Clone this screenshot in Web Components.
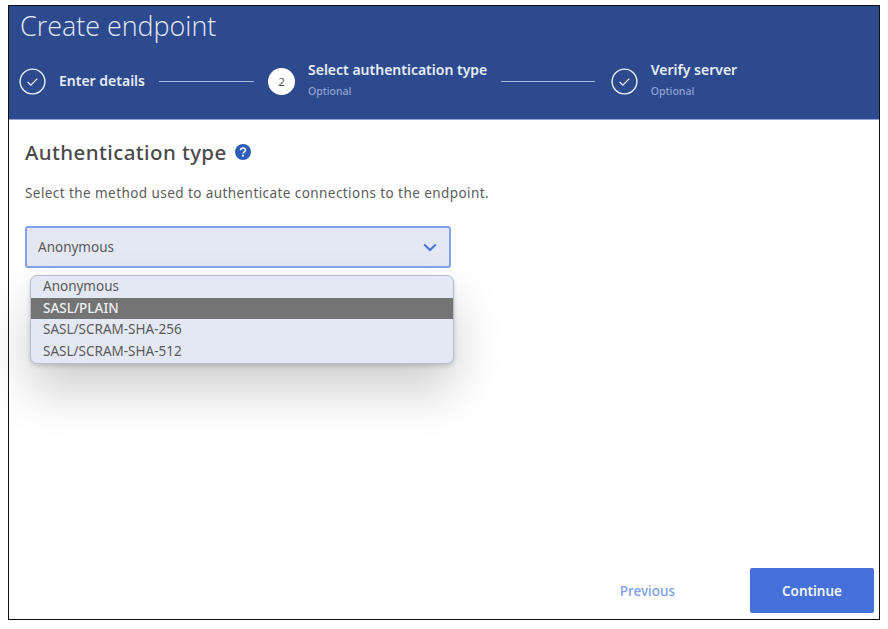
<!DOCTYPE html>
<html>
<head>
<meta charset="utf-8">
<title>Create endpoint</title>
<style>
  html, body { margin: 0; background: #fff; }
  body { padding: 5px 8px 0; font-family: "Noto Sans", "Open Sans", sans-serif; }
</style>
</head>
<body>
<endpoint-wizard>
  <wizard-header slot="header" heading="Create endpoint">
    <wizard-step state="done" label="Enter details" line="95" after="14"></wizard-step>
    <wizard-step state="current" number="2" label="Select authentication type" note="Optional" line="94" after="15.5"></wizard-step>
    <wizard-step state="done" label="Verify server" note="Optional"></wizard-step>
  </wizard-header>
  <auth-form></auth-form>
  <wizard-footer slot="footer"></wizard-footer>
</endpoint-wizard>

<script>
/** Outer frame: header on top, body fills the rest, footer on the bottom. */
class EndpointWizard extends HTMLElement {
  constructor(){
    super()
    this.attachShadow({mode: 'open'}).innerHTML = /* html */`
      <style>
        :host {
          display: flex;
          flex-direction: column;
          box-sizing: border-box;
          width: 872px;
          height: 615px;
          border: 1.5px solid #111;
        }
        main { flex: 1; min-height: 0; }
      </style>
      <slot name="header"></slot>
      <main><slot></slot></main>
      <slot name="footer"></slot>
    `
  }
}

/** Blue band with the title and the row of steps. */
class WizardHeader extends HTMLElement {
  constructor(){
    super()
    this.attachShadow({mode: 'open'}).innerHTML = /* html */`
      <style>
        :host {
          display: block;
          height: 114px;
          box-sizing: border-box;
          padding: 3px 10px 0;
          background: #2d4a8e;
          border-bottom: 1px solid #8ea3cf;
        }
        h1 {
          margin: 0 0 0 1px;
          font: 300 26.9px/34px "Open Sans", "Noto Sans", sans-serif;
          color: #e4e9f5;
        }
        .steps {
          display: flex;
          margin-top: 18px;
        }
      </style>
      <h1>${this.getAttribute('heading')}</h1>
      <div class="steps"><slot></slot></div>
    `
  }
}

/** One step of the progress row; the line after it is left out on the last one. */
class WizardStep extends HTMLElement {
  get icon(){
    if (this.getAttribute('state') === 'current') {
      return `<span class="num">${this.getAttribute('number')}</span>`
    }
    return /* html */`
      <svg width="27" height="27" viewBox="0 0 27 27" fill="none" stroke="#eef1f8">
        <circle cx="13.5" cy="13.5" r="12.4" stroke-width="1.4"/>
        <path d="M8.6 14l3.3 3.2 6.4-6.6" stroke-width="1.3"/>
      </svg>`
  }

  constructor(){
    super()
    const note = this.getAttribute('note')
    const line = this.getAttribute('line')
    const after = this.getAttribute('after')
    this.attachShadow({mode: 'open'}).innerHTML = /* html */`
      <style>
        :host { display: flex; align-items: flex-start; height: 40px; }
        .icon { flex: none; width: 27px; height: 27px; margin-top: 7px; }
        .num {
          display: flex;
          align-items: center;
          justify-content: center;
          width: 27px;
          height: 27px;
          border-radius: 50%;
          background: #fff;
          color: #555;
          font-size: 11.5px;
        }
        .text { margin-left: 13px; white-space: nowrap; }
        .label {
          font-size: 14px;
          line-height: 18px;
          font-weight: 600;
          color: #e8ecf6;
        }
        .text.single { margin-top: 11px; }
        .note {
          margin-top: 5px;
          font-size: 10.5px;
          line-height: 14px;
          font-weight: 500;
          color: #8fa4d4;
        }
        .line {
          flex: none;
          height: 1px;
          margin: 20px 14px 0 14px;
          background: #a9b8dc;
        }
      </style>
      <div class="icon">${this.icon}</div>
      <div class="text ${note ? '' : 'single'}">
        <div class="label">${this.getAttribute('label')}</div>
        ${note ? `<div class="note">${note}</div>` : ''}
      </div>
      ${line ? `<div class="line" style="width:${line}px;margin-right:${after}px"></div>` : ''}
    `
  }
}

/** Heading, help text, the select and its open list. */
class AuthForm extends HTMLElement {
  constructor(){
    super()
    this.attachShadow({mode: 'open'}).innerHTML = /* html */`
      <style>
        :host {
          display: block;
          padding: 18px 15px 0 16px;
          color: #4d4d4d;
        }
        h2 {
          display: flex;
          align-items: center;
          margin: 0;
          font-size: 20.5px;
          line-height: 28px;
          font-weight: 500;
          letter-spacing: .4px;
          color: #4a4a4a;
        }
        h2 svg { margin-left: 8px; }
        p {
          margin: 18px 0 0;
          font-size: 13.5px;
          line-height: 18px;
          letter-spacing: .43px;
          color: #5c5c5c;
        }
      </style>
      <h2>Authentication type
        <svg width="16" height="16" viewBox="0 0 16 16">
          <circle cx="8" cy="8" r="8" fill="#2d5dba"/>
          <path d="M5.6 6.2c0-1.4 1-2.2 2.4-2.2s2.4.8 2.4 2.1c0 1-.6 1.5-1.3 2-.6.4-.9.7-.9 1.3" fill="none" stroke="#fff" stroke-width="1.7"/>
          <rect x="7.05" y="10.7" width="1.9" height="1.9" fill="#fff"/>
        </svg>
      </h2>
      <p>Select the method used to authenticate connections to the endpoint.</p>
      <auth-select value="Anonymous"></auth-select>
    `
  }
}

class AuthSelect extends HTMLElement {
  constructor(){
    super()
    const options = ['Anonymous', 'SASL/PLAIN', 'SASL/SCRAM-SHA-256', 'SASL/SCRAM-SHA-512']
    this.attachShadow({mode: 'open'}).innerHTML = /* html */`
      <style>
        :host {
          display: block;
          position: relative;
          width: 426px;
          margin-top: 24px;
          font-size: 13.5px;
          color: #5a5a5a;
        }
        .box {
          display: flex;
          align-items: center;
          justify-content: space-between;
          box-sizing: border-box;
          height: 42px;
          padding: 0 12px 0 11px;
          background: #e4e8f5;
          border: 2px solid #83a3ea;
          border-radius: 3px;
        }
        ul {
          position: absolute;
          top: 49px;
          left: 5px;
          width: 424px;
          box-sizing: border-box;
          margin: 0;
          padding: 0;
          list-style: none;
          overflow: visible;
          background: #e4e8f5;
          border: 1px solid #b9bcc6;
          border-radius: 7px;
          box-shadow: 0 2px 4px rgba(0,0,0,.16), 0 26px 50px rgba(0,0,0,.2);
        }
        li {
          height: 21.7px;
          padding-left: 12px;
          line-height: 21.7px;
          white-space: nowrap;
        }
        li.on {
          background: #747474;
          color: #eef0f6;
          font-weight: 500;
        }
      </style>
      <div class="box">
        <span>${this.getAttribute('value')}</span>
        <svg width="14" height="9" viewBox="0 0 14 9" fill="none" stroke="#4a72d8" stroke-width="2">
          <path d="M1.2 1.5L7 7l5.8-5.5"/>
        </svg>
      </div>
      <ul>${options.map(o => `<li class="${o === 'SASL/PLAIN' ? 'on' : ''}">${o}</li>`).join('')}</ul>
    `
  }
}

class WizardFooter extends HTMLElement {
  constructor(){
    super()
    this.attachShadow({mode: 'open'}).innerHTML = /* html */`
      <style>
        :host {
          display: flex;
          justify-content: flex-end;
          align-items: center;
          gap: 75px;
          padding: 0 5px 6px 0;
          font-size: 13.5px;
          font-weight: 600;
        }
        .prev { color: #7f9de6; font-weight: 500; }
        .next {
          display: flex;
          align-items: center;
          justify-content: center;
          width: 124px;
          height: 45px;
          background: #4570da;
          border-radius: 2px;
          color: #f2f5fc;
        }
      </style>
      <span class="prev">Previous</span>
      <span class="next">Continue</span>
    `
  }
}

customElements.define('endpoint-wizard', EndpointWizard)
customElements.define('wizard-header', WizardHeader)
customElements.define('wizard-step', WizardStep)
customElements.define('auth-form', AuthForm)
customElements.define('auth-select', AuthSelect)
customElements.define('wizard-footer', WizardFooter)
</script>
</body>
</html>
